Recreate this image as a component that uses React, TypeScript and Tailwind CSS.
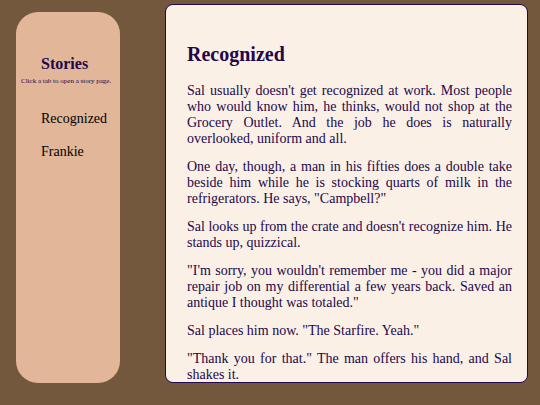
import { useState } from "react";

const stories = [
  {
    title: "Recognized",
    paragraphs: [
      "Sal usually doesn't get recognized at work. Most people who would know him, he thinks, would not shop at the Grocery Outlet. And the job he does is naturally overlooked, uniform and all.",
      "One day, though, a man in his fifties does a double take beside him while he is stocking quarts of milk in the refrigerators. He says, \"Campbell?\"",
      "Sal looks up from the crate and doesn't recognize him. He stands up, quizzical.",
      "\"I'm sorry, you wouldn't remember me - you did a major repair job on my differential a few years back. Saved an antique I thought was totaled.\"",
      "Sal places him now. \"The Starfire. Yeah.\"",
      "\"Thank you for that.\" The man offers his hand, and Sal shakes it.",
    ],
  },
  { title: "Frankie", paragraphs: [] },
];

export default function App() {
  const [selected, setSelected] = useState(0);
  const story = stories[selected];

  return (
    <div className="flex h-screen gap-[45px] bg-[#73583e] pt-1 pr-3 pb-[22px] pl-4 font-['Liberation_Serif',serif] text-[#22074a]">
      <nav className="mt-2 w-[104px] shrink-0 rounded-[22px] bg-[#e2b698] pt-10">
        <h2 className="ml-[25px] text-base leading-6 font-bold">Stories</h2>
        <p className="ml-[5px] text-[7px] leading-[10px] whitespace-nowrap">
          Click a tab to open a story page.
        </p>
        <ul className="mt-[23px] ml-[25px] flex flex-col gap-[13px] text-sm leading-5 text-black">
          {stories.map((item, index) => (
            <li key={item.title}>
              <button type="button" className="cursor-pointer" onClick={() => setSelected(index)}>
                {item.title}
              </button>
            </li>
          ))}
        </ul>
      </nav>
      <main className="min-w-0 flex-1 overflow-y-auto rounded-lg border border-[#22074a] bg-[#faf0e6] pt-[37px] pr-[15px] pl-[21px] [scrollbar-width:none]">
        <h1 className="text-xl leading-6 font-bold">{story.title}</h1>
        <div className="mt-[17px] flex flex-col gap-3 text-justify text-sm leading-4">
          {story.paragraphs.map((text) => (
            <p key={text}>{text}</p>
          ))}
        </div>
      </main>
    </div>
  );
}
